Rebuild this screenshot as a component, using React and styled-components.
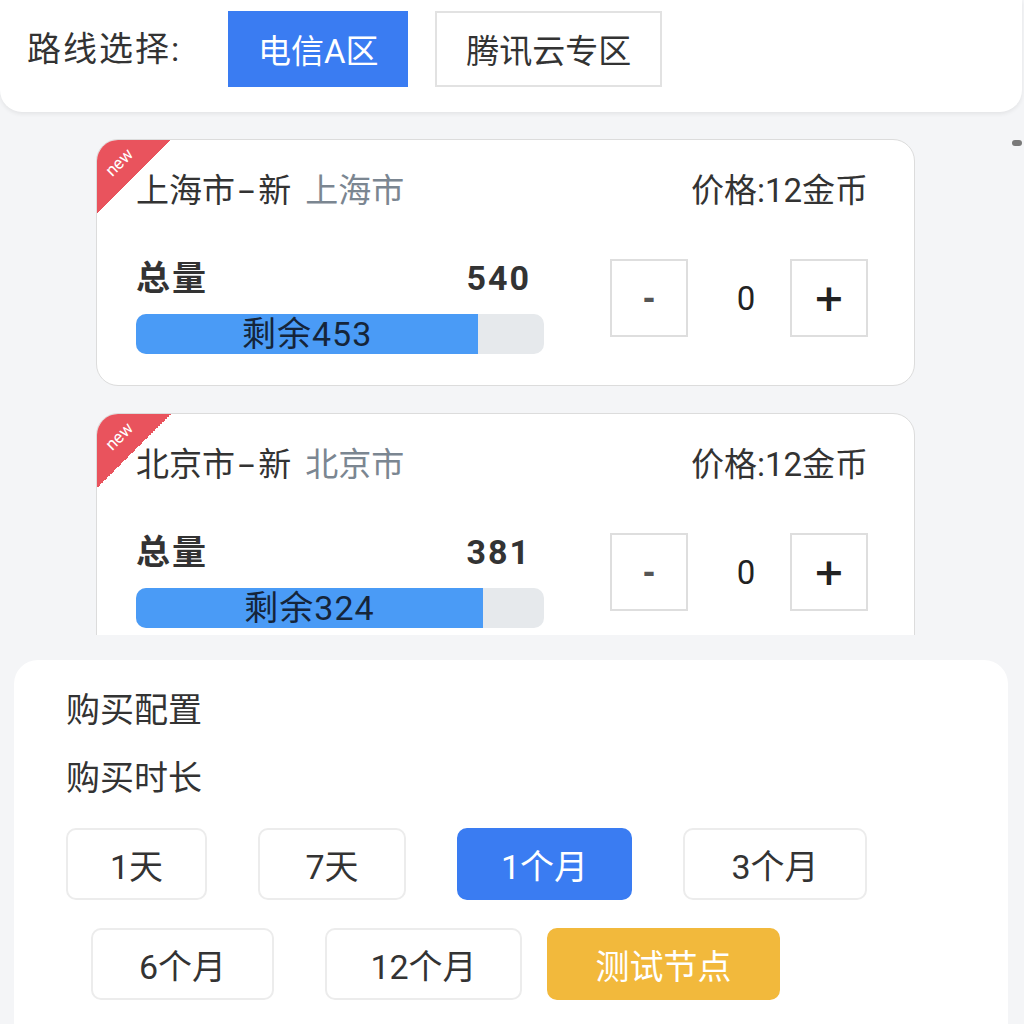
import styled, { createGlobalStyle } from "styled-components";

const GlobalStyle = createGlobalStyle`
  body {
    margin: 0;
    background: #f4f5f7;
    font-family: Roboto, "Noto Sans CJK SC", sans-serif;
    color: #333;
  }
`;

const Page = styled.div`
  display: flex;
  flex-direction: column;
  height: 1024px;
  overflow: hidden;
`;

const Header = styled.div`
  display: flex;
  align-items: flex-start;
  height: 112px;
  box-sizing: border-box;
  padding: 11px 0 0 27px;
  margin-right: 2px;
  background: #fff;
  border-radius: 0 0 22px 22px;
  box-shadow: 0 2px 4px rgba(0, 0, 0, 0.07);
  flex-shrink: 0;
`;

const HeaderLabel = styled.div`
  font-size: 34px;
  line-height: 76px;
  letter-spacing: 2px;
  margin-right: 47px;
`;

const LineButton = styled.div`
  width: ${(p) => p.w}px;
  height: 76px;
  box-sizing: border-box;
  margin-right: 27px;
  display: flex;
  align-items: center;
  justify-content: center;
  font-size: 33px;
  color: ${(p) => (p.active ? "#fff" : "#333")};
  background: ${(p) => (p.active ? "#3a7cf2" : "#fff")};
  border: 2px solid ${(p) => (p.active ? "#3a7cf2" : "#e2e2e2")};
`;

const List = styled.div`
  position: relative;
  height: 523px;
  flex-shrink: 0;
  overflow: hidden;
  box-sizing: border-box;
  padding: 27px 0 0 96px;
`;

const ScrollThumb = styled.div`
  position: absolute;
  right: 2px;
  top: 28px;
  width: 10px;
  height: 6px;
  border-radius: 3px;
  background: #7a7a7a;
`;

const Card = styled.div`
  position: relative;
  overflow: hidden;
  width: 819px;
  box-sizing: border-box;
  padding: 31px 46px 31px 39px;
  margin-bottom: 27px;
  background: #fff;
  border: 1px solid #dcdcdc;
  border-radius: 22px;
`;

const Ribbon = styled.div`
  position: absolute;
  left: 0;
  top: 0;
  width: 74px;
  height: 74px;
  background: linear-gradient(135deg, #e9535d 50%, transparent 50%);
`;

const RibbonText = styled.span`
  position: absolute;
  left: 2px;
  top: 2px;
  width: 40px;
  height: 40px;
  display: flex;
  align-items: center;
  justify-content: center;
  transform: rotate(-45deg);
  font-family: Roboto, sans-serif;
  font-size: 17px;
  color: #fff;
`;

const TitleRow = styled.div`
  display: flex;
  justify-content: space-between;
  font-size: 33px;
  line-height: 40px;
`;

const Dash = styled.span`
  display: inline-block;
  margin: 0 7px;
  transform: scaleX(1.8);
`;

const City = styled.span`
  color: #7b8691;
  margin-left: 14px;
`;

const Body = styled.div`
  display: flex;
  justify-content: space-between;
  align-items: flex-start;
  margin-top: 47px;
`;

const Left = styled.div`
  width: 408px;
`;

const TotalRow = styled.div`
  display: flex;
  justify-content: space-between;
  padding-right: 13px;
  font-size: 34px;
  font-weight: bold;
  line-height: 40px;
  letter-spacing: 2px;
`;

const Bar = styled.div`
  margin-top: 16px;
  height: 40px;
  border-radius: 10px;
  background: #e6e9ec;
  overflow: hidden;
  display: flex;
`;

const Fill = styled.div`
  height: 100%;
  background: #4a9bf6;
  display: flex;
  align-items: center;
  justify-content: center;
  font-size: 34px;
  line-height: 40px;
  letter-spacing: 1px;
  color: #15253a;
`;

const Stepper = styled.div`
  display: flex;
  align-items: center;
  margin-top: 1px;
`;

const StepBox = styled.div`
  width: 78px;
  height: 78px;
  box-sizing: border-box;
  border: 2px solid #dedede;
  display: flex;
  align-items: center;
  justify-content: center;
  font-family: "DejaVu Sans", sans-serif;
  font-size: ${(p) => (p.plus ? 38 : 30)}px;
  font-weight: bold;
  color: ${(p) => (p.plus ? "#222" : "#555")};
`;

const Count = styled.div`
  width: 102px;
  box-sizing: border-box;
  padding-left: 14px;
  text-align: center;
  font-size: 33px;
  color: #222;
`;

const Panel = styled.div`
  flex: 1;
  margin: 25px 16px 0 14px;
  padding: 30px 0 0 52px;
  background: #fff;
  border-radius: 24px 24px 0 0;
`;

const PanelTitle = styled.div`
  font-size: 34px;
  line-height: 40px;
  margin-bottom: ${(p) => p.mb}px;
`;

const DurationRow = styled.div`
  display: flex;
  gap: 51px;
  padding-left: ${(p) => p.indent}px;
  margin-bottom: 28px;
`;

const Duration = styled.div`
  width: ${(p) => p.w}px;
  height: 72px;
  box-sizing: border-box;
  margin-left: ${(p) => p.ml || 0}px;
  border-radius: 10px;
  display: flex;
  align-items: center;
  justify-content: center;
  font-size: 34px;
  color: ${(p) => (p.kind === "plain" ? "#333" : "#fff")};
  background: ${(p) =>
    p.kind === "active" ? "#3a7cf2" : p.kind === "test" ? "#f2b93c" : "#fff"};
  border: 2px solid
    ${(p) =>
      p.kind === "active" ? "#3a7cf2" : p.kind === "test" ? "#f2b93c" : "#ececec"};
`;

const nodes = [
  { name: "上海市", tag: "新", city: "上海市", total: 540, left: 453 },
  { name: "北京市", tag: "新", city: "北京市", total: 381, left: 324 },
];

function NodeCard({ node }) {
  return (
    <Card>
      <Ribbon>
        <RibbonText>new</RibbonText>
      </Ribbon>
      <TitleRow>
        <span>
          {node.name}
          <Dash>-</Dash>
          {node.tag}
          <City>{node.city}</City>
        </span>
        <span>价格:12金币</span>
      </TitleRow>
      <Body>
        <Left>
          <TotalRow>
            <span>总量</span>
            <span>{node.total}</span>
          </TotalRow>
          <Bar>
            <Fill style={{ width: `${(node.left / node.total) * 100}%` }}>
              剩余{node.left}
            </Fill>
          </Bar>
        </Left>
        <Stepper>
          <StepBox>-</StepBox>
          <Count>0</Count>
          <StepBox plus>+</StepBox>
        </Stepper>
      </Body>
    </Card>
  );
}

export default function App() {
  return (
    <Page>
      <GlobalStyle />
      <Header>
        <HeaderLabel>路线选择:</HeaderLabel>
        <LineButton w={180} active>
          电信A区
        </LineButton>
        <LineButton w={227}>腾讯云专区</LineButton>
      </Header>
      <List>
        <ScrollThumb />
        {nodes.map((n) => (
          <NodeCard key={n.name} node={n} />
        ))}
      </List>
      <Panel>
        <PanelTitle mb={28}>购买配置</PanelTitle>
        <PanelTitle mb={30}>购买时长</PanelTitle>
        <DurationRow indent={0}>
          <Duration kind="plain" w={141}>1天</Duration>
          <Duration kind="plain" w={148}>7天</Duration>
          <Duration kind="active" w={175}>1个月</Duration>
          <Duration kind="plain" w={184}>3个月</Duration>
        </DurationRow>
        <DurationRow indent={25}>
          <Duration kind="plain" w={183}>6个月</Duration>
          <Duration kind="plain" w={197}>12个月</Duration>
          <Duration kind="test" w={233} ml={-26}>测试节点</Duration>
        </DurationRow>
      </Panel>
    </Page>
  );
}
